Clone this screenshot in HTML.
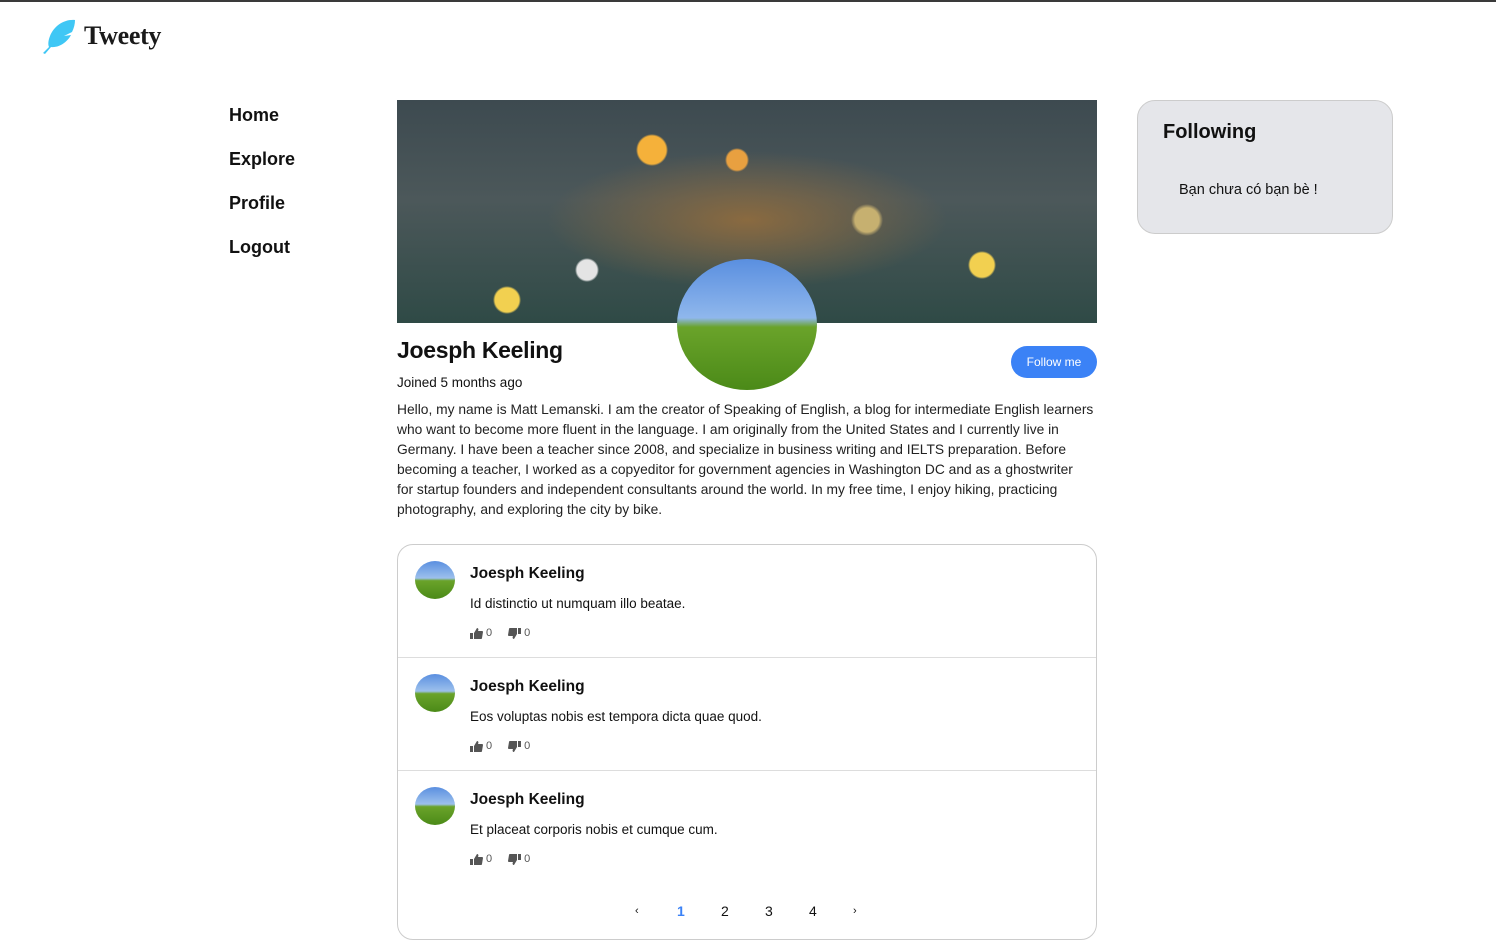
<!DOCTYPE html>
<html><head><meta charset="utf-8"><style>
*{box-sizing:border-box;margin:0;padding:0}
body{width:1496px;height:947px;overflow:hidden;background:#fff;font-family:"Liberation Sans",sans-serif;color:#111;position:relative}
.topline{position:absolute;left:0;top:0;width:100%;height:2px;background:#3a3a3a}
.logo{position:absolute;left:42px;top:18px;display:flex;align-items:center}
.logo span{font-family:"Liberation Serif",serif;font-weight:bold;font-size:26px;margin-left:8px;color:#1a1a1a;letter-spacing:-0.3px}
.nav{position:absolute;left:229px;top:105px}
.nav div{font-weight:bold;font-size:18px;height:44px}
.cover{position:absolute;left:397px;top:100px;width:700px;height:223px;overflow:hidden;
background:
radial-gradient(circle at 255px 50px,#f5b13a 0 14px,transparent 16px),
radial-gradient(circle at 340px 60px,#e8a040 0 10px,transparent 12px),
radial-gradient(circle at 110px 200px,#f2d050 0 12px,transparent 14px),
radial-gradient(circle at 190px 170px,#e4e4e4 0 10px,transparent 12px),
radial-gradient(circle at 585px 165px,#f2d050 0 12px,transparent 14px),
radial-gradient(circle at 470px 120px,#c6b070 0 12px,transparent 16px),
radial-gradient(ellipse at 350px 120px,#8a6a40 0,transparent 200px),
linear-gradient(180deg,#3d4a50 0%,#4c585a 45%,#2f4a46 100%)}
.avatar{position:absolute;left:677px;top:259px;width:140px;height:131px;border-radius:50%;background:linear-gradient(180deg,#5a8fe0 0%,#8fb7ec 45%,#6aa32a 52%,#4b8a18 100%)}
.name{position:absolute;left:397px;top:337px;font-size:23px;font-weight:bold;letter-spacing:-0.3px}
.joined{position:absolute;left:397px;top:375px;font-size:13.5px}
.follow{position:absolute;left:1011px;top:346px;width:86px;height:32px;border-radius:16px;background:#3b82f6;color:#fff;font-size:12px;text-align:center;line-height:32px}
.bio{position:absolute;left:397px;top:400px;font-size:13.8px;line-height:20px;color:#222;white-space:nowrap}
.feed{position:absolute;left:397px;top:544px;width:700px;height:396px;border:1px solid #ccc;border-radius:16px}
.post{height:113px;border-bottom:1px solid #ddd;position:relative}
.post .av{position:absolute;left:17px;top:16px;width:40px;height:38px;border-radius:50%;background:linear-gradient(180deg,#5a8fe0 0%,#9cc0ec 45%,#6aa32a 52%,#4b8a18 100%)}
.post b{position:absolute;left:72px;top:20px;font-size:15.5px}
.post p{position:absolute;left:72px;top:51px;font-size:13.5px}
.post .r{position:absolute;left:72px;top:82px;font-size:11px;color:#555;display:flex;align-items:center}
.r svg{margin-right:3px}
.pg{position:absolute;top:358px;left:0;width:100%;font-size:14px}
.pg span{position:absolute}
.side{position:absolute;left:1137px;top:100px;width:256px;height:134px;border:1px solid #ccc;border-radius:18px;background:#e5e6ea}
.side h3{position:absolute;left:25px;top:20px;font-size:20px}
.side p{position:absolute;left:41px;top:81px;font-size:14.5px}
</style></head><body>
<div class="topline"></div>
<div class="logo"><svg width="34" height="36" viewBox="0 0 34 36"><path d="M33 2C22 1 12 8 8 18c-2 5-2 9-1 11L1 35l2 1 6-7c9 1 17-6 20-12l-7 1 8-4c2-4 3-8 3-12z" fill="#3fc7f5"/></svg><span>Tweety</span></div>
<div class="nav"><div>Home</div><div>Explore</div><div>Profile</div><div>Logout</div></div>
<div class="cover"></div>
<div class="avatar"></div>
<div class="name">Joesph Keeling</div>
<div class="joined">Joined 5 months ago</div>
<div class="follow">Follow me</div>
<div class="bio">Hello, my name is Matt Lemanski. I am the creator of Speaking of English, a blog for intermediate English learners<br>who want to become more fluent in the language. I am originally from the United States and I currently live in<br>Germany. I have been a teacher since 2008, and specialize in business writing and IELTS preparation. Before<br>becoming a teacher, I worked as a copyeditor for government agencies in Washington DC and as a ghostwriter<br>for startup founders and independent consultants around the world. In my free time, I enjoy hiking, practicing<br>photography, and exploring the city by bike.</div>
<div class="feed">
<div class="post"><div class="av"></div><b>Joesph Keeling</b><p>Id distinctio ut numquam illo beatae.</p><div class="r"><svg width="13" height="11" viewBox="0 0 13 11"><path d="M0 5h3v6H0zM4 5l3-5c1 0 2 1 1 3h4c1 0 1 1 1 1l-1 6c0 1-1 1-1 1H4z" fill="#555"/></svg>0<span style="width:16px"></span><svg width="13" height="11" viewBox="0 0 13 11" style="transform:scaleY(-1)"><path d="M0 5h3v6H0zM4 5l3-5c1 0 2 1 1 3h4c1 0 1 1 1 1l-1 6c0 1-1 1-1 1H4z" fill="#555" transform="translate(13 0) scale(-1 1)"/></svg>0</div></div>
<div class="post"><div class="av"></div><b>Joesph Keeling</b><p>Eos voluptas nobis est tempora dicta quae quod.</p><div class="r"><svg width="13" height="11" viewBox="0 0 13 11"><path d="M0 5h3v6H0zM4 5l3-5c1 0 2 1 1 3h4c1 0 1 1 1 1l-1 6c0 1-1 1-1 1H4z" fill="#555"/></svg>0<span style="width:16px"></span><svg width="13" height="11" viewBox="0 0 13 11" style="transform:scaleY(-1)"><path d="M0 5h3v6H0zM4 5l3-5c1 0 2 1 1 3h4c1 0 1 1 1 1l-1 6c0 1-1 1-1 1H4z" fill="#555" transform="translate(13 0) scale(-1 1)"/></svg>0</div></div>
<div class="post" style="border:none"><div class="av"></div><b>Joesph Keeling</b><p>Et placeat corporis nobis et cumque cum.</p><div class="r"><svg width="13" height="11" viewBox="0 0 13 11"><path d="M0 5h3v6H0zM4 5l3-5c1 0 2 1 1 3h4c1 0 1 1 1 1l-1 6c0 1-1 1-1 1H4z" fill="#555"/></svg>0<span style="width:16px"></span><svg width="13" height="11" viewBox="0 0 13 11" style="transform:scaleY(-1)"><path d="M0 5h3v6H0zM4 5l3-5c1 0 2 1 1 3h4c1 0 1 1 1 1l-1 6c0 1-1 1-1 1H4z" fill="#555" transform="translate(13 0) scale(-1 1)"/></svg>0</div></div>
<div class="pg"><span style="left:237px;font-size:11px;top:2px">‹</span><span style="left:279px;color:#3b82f6;font-weight:bold">1</span><span style="left:323px">2</span><span style="left:367px">3</span><span style="left:411px">4</span><span style="left:455px;font-size:11px;top:2px">›</span></div>
</div>
<div class="side"><h3>Following</h3><p>Bạn chưa có bạn bè !</p></div>
</body></html>
